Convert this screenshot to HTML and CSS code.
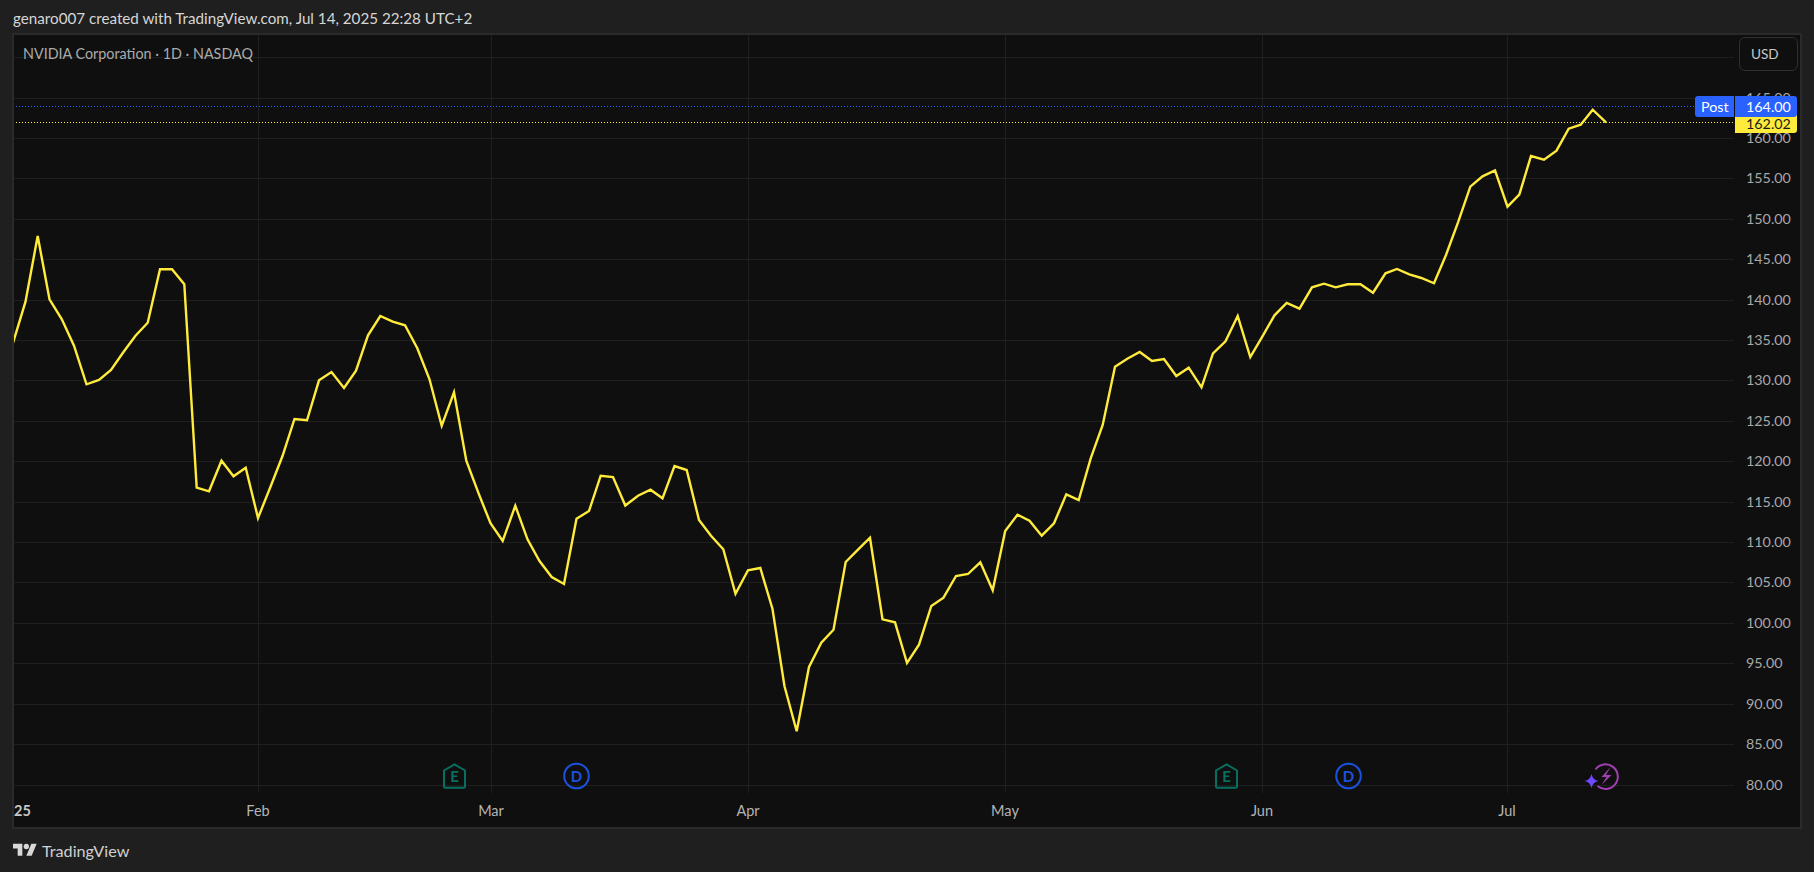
FILE: index.html
```html
<!DOCTYPE html>
<html lang="en">
<head>
<meta charset="utf-8">
<title>NVIDIA Corporation chart</title>
<link rel="stylesheet" href="styles.css">
</head>
<body>
<div class="page">
  <header class="top">genaro007 created with TradingView.com, Jul 14, 2025 22:28 UTC+2</header>
  <main class="panel">
    <svg class="chart" viewBox="14 35 1786 792" width="1786" height="792" xmlns="http://www.w3.org/2000/svg">
      <g class="grid">
        <path d="M13 57.5H1734M13 98.5H1734M13 138.5H1734M13 178.5H1734M13 219.5H1734M13 259.5H1734M13 300.5H1734M13 340.5H1734M13 380.5H1734M13 421.5H1734M13 461.5H1734M13 502.5H1734M13 542.5H1734M13 582.5H1734M13 623.5H1734M13 663.5H1734M13 704.5H1734M13 744.5H1734M13 785.5H1734"/>
        <path d="M258.5 34V793M491.5 34V793M748.5 34V793M1005.5 34V793M1262.5 34V793M1507.5 34V793"/>
      </g>
      <path class="dot-blue" d="M13 106.5H1695"/>
      <path class="dot-yellow" d="M13 122.5H1734"/>
      <polyline class="price-line" points="13,343 25.5,301.7 37.7,236 49.5,299.3 61.7,319 74,345.7 86.5,384.3 99,380 111,370 123.3,352.3 135.5,335.7 147.7,322.7 160,269.3 172,269.3 184.3,284.3 196.7,487.7 209,491.3 221.5,460.7 233.5,476.3 245.7,467.7 258,518 270.5,486.7 282.5,456 294.5,419 307,420.3 319,380.3 331.5,372 344,388 356,370.7 368,335.3 380.3,316 392.7,321.7 405,325.3 417.3,348.3 429.5,379.3 441.7,425.7 454,392.3 466.3,460.7 478.3,492.7 490.5,523.3 502.7,541 515.3,505.7 527.5,539.3 539.5,561 551.7,577 564,584 576.5,518.7 589,511 600.7,475.7 613,477 625.3,505.5 638,495.7 650.5,489.7 662.5,498.3 674.5,466 686.7,470 699,520 711,535.7 723.3,549.3 735.5,593.7 748,570.3 760.3,568 772.5,609 784.5,686.3 796.7,731.3 809,667 821.3,642.7 833.5,629.7 845.7,562 858,549.7 870,537.7 882.5,619.3 895,622.3 907,663 919,644.7 931.3,606 943.5,597.7 956,576 968,574 980.3,562.3 992.7,590.3 1005.2,531 1017.5,514.7 1029.5,520.7 1041.7,535.7 1054,523.3 1066.3,494.3 1078.7,500 1090.7,458.3 1102.7,425 1115,366.7 1127.3,358.7 1139.7,352 1152,361 1164,359 1176.3,376 1188.7,367.7 1201.5,387.3 1213,353.3 1225.5,341.3 1237.7,316 1250.3,357 1262.3,336.7 1274.5,315.3 1286.7,303 1299.5,308.7 1312,287.3 1324,283.7 1335.7,287.3 1347.7,284.3 1360.5,284.3 1373,292.7 1385.5,273.3 1397,269 1409.3,274.3 1421.3,278 1434,283.3 1446,255 1458.3,221.7 1470.3,186.7 1482.5,176.3 1495,170.3 1507.5,206.7 1519.3,194.7 1531,156 1544,159.7 1556.5,150.7 1568.7,128.7 1580.7,124.7 1592.7,109.7 1606,122.3"/>
      <g class="price-labels">
        <text x="1746" y="102.5">165.00</text>
        <text x="1746" y="143">160.00</text><text x="1746" y="183">155.00</text>
        <text x="1746" y="224">150.00</text><text x="1746" y="264">145.00</text>
        <text x="1746" y="305">140.00</text><text x="1746" y="345">135.00</text>
        <text x="1746" y="385">130.00</text><text x="1746" y="426">125.00</text>
        <text x="1746" y="466">120.00</text><text x="1746" y="507">115.00</text>
        <text x="1746" y="547">110.00</text><text x="1746" y="587">105.00</text>
        <text x="1746" y="628">100.00</text><text x="1746" y="668">95.00</text>
        <text x="1746" y="709">90.00</text><text x="1746" y="749">85.00</text>
        <text x="1746" y="790">80.00</text>
      </g>
      <g class="time-labels">
        <text class="year" x="14" y="816">25</text>
        <text x="258" y="816" class="mid">Feb</text><text x="491" y="816" class="mid">Mar</text>
        <text x="748" y="816" class="mid">Apr</text><text x="1005" y="816" class="mid">May</text>
        <text x="1262" y="816" class="mid">Jun</text><text x="1507" y="816" class="mid">Jul</text>
      </g>
      <g class="ev-e">
        <path d="M454.5 764.3L465 770.5V786.2Q465 787.7 463.5 787.7H445.5Q444 787.7 444 786.2V770.5Z"/>
        <text x="454.5" y="781.5">E</text>
      </g>
      <g class="ev-d"><circle cx="576.5" cy="776" r="12.3"/><text x="576.5" y="781.5">D</text></g>
      <g class="ev-e">
        <path d="M1226.5 764.3L1237 770.5V786.2Q1237 787.7 1235.5 787.7H1217.5Q1216 787.7 1216 786.2V770.5Z"/>
        <text x="1226.5" y="781.5">E</text>
      </g>
      <g class="ev-d"><circle cx="1348.5" cy="776" r="12.3"/><text x="1348.5" y="781.5">D</text></g>
      <g class="ev-s">
        <path class="ring" d="M1595.5 769.5A12.3 12.3 0 1 1 1597.5 786"/>
        <path class="bolt" d="M1610.5 767L1601.5 777H1606.5L1601.5 785L1611.5 775H1606Z"/>
        <path class="star" d="M1591.5 774Q1592.8 780 1598.5 781Q1592.8 782 1591.5 788Q1590.2 782 1584.5 781Q1590.2 780 1591.5 774Z"/>
      </g>
    </svg>
    <div class="legend">NVIDIA Corporation · 1D · NASDAQ</div>
    <button class="currency">USD</button>
    <div class="tag tag-last">162.02</div>
    <div class="tag tag-post-name">Post</div>
    <div class="tag tag-post">164.00</div>
  </main>
  <footer class="bottom">
    <svg class="logo" viewBox="0 0 36 28" width="24" height="19" xmlns="http://www.w3.org/2000/svg">
      <path d="M14 22H7V11H0V4h14v18ZM28 22h-8l7.5-18h8L28 22Z"/><circle cx="20" cy="8" r="4"/>
    </svg>
    <span class="brand">TradingView</span>
  </footer>
</div>
</body>
</html>
```

FILE: styles.css
```css
* { box-sizing: border-box; }
html, body { margin: 0; padding: 0; background: #1f1f1f; }
body { font-family: "Lato", "Liberation Sans", sans-serif; overflow: hidden; }
.page { width: 1814px; height: 872px; display: flex; flex-direction: column; }
.top {
  height: 33px; padding: 6px 0 0 13px;
  font-size: 15.2px; line-height: 24px; color: #d6d6d6; white-space: nowrap;
}
.panel {
  position: relative; width: 1790px; height: 796px; margin-left: 12px;
  border: 2px solid #2a2a2a; background: #0f0f0f; overflow: hidden;
}
.chart { display: block; }
.grid path { stroke: #1f1f1f; stroke-width: 1; fill: none; }
.dot-blue { stroke: #2962ff; stroke-width: 1; stroke-dasharray: 1 2; fill: none; }
.dot-yellow { stroke: #ffeb3b; stroke-width: 1; stroke-dasharray: 1 2; fill: none; }
.price-line { fill: none; stroke: #ffeb3b; stroke-width: 2.4; stroke-linejoin: miter; }
.price-labels text { font-size: 14.3px; fill: #a8a8a8; }
.time-labels text { font-size: 14.5px; fill: #b4b4b4; }
.time-labels .mid { text-anchor: middle; }
.time-labels .year { font-weight: 700; fill: #c8c8c8; }
.ev-e path { fill: none; stroke: #086f60; stroke-width: 2; }
.ev-e text { font-size: 15px; font-weight: 700; fill: #086f60; text-anchor: middle; }
.ev-d circle { fill: none; stroke: #1a52e0; stroke-width: 2; }
.ev-d text { font-size: 15px; font-weight: 700; fill: #1a52e0; text-anchor: middle; }
.ring { fill: none; stroke: #a040b0; stroke-width: 2; }
.bolt { fill: #a040b0; }
.star { fill: #7048ff; }
.legend {
  position: absolute; left: 9px; top: 9px;
  font-size: 14.35px; line-height: 20px; color: #ababab; white-space: nowrap;
}
.currency {
  position: absolute; left: 1725px; top: 2px; width: 59px; height: 34px;
  padding: 0 0 0 11px; text-align: left; background: #0f0f0f;
  border: 1.5px solid #2f2f2f; border-radius: 6px;
  font: 13.6px "Lato", sans-serif; color: #c8c8c8;
}
.tag {
  position: absolute; height: 20px; font-size: 14.3px; line-height: 21px; white-space: nowrap;
}
.tag-post-name {
  left: 1681px; top: 61px; width: 39px; height: 21px; padding-left: 6px;
  background: #2962ff; color: #fff; border-radius: 3px 0 0 3px;
}
.tag-post {
  left: 1721px; top: 61px; width: 62px; height: 21px; padding-left: 11px;
  background: #2962ff; color: #fff; border-radius: 0 3px 3px 0;
}
.tag-last {
  left: 1721px; top: 78px; width: 62px; padding-left: 11px;
  background: #ffeb3b; color: #1a1a1a; border-radius: 0 0 3px 0;
}
.bottom { flex: 1; display: flex; align-items: center; padding: 0 0 0 13px; gap: 5px; }
.logo { display: block; fill: #d8d8d8; }
.brand { font-size: 16.2px; color: #d0d0d0; }
```
